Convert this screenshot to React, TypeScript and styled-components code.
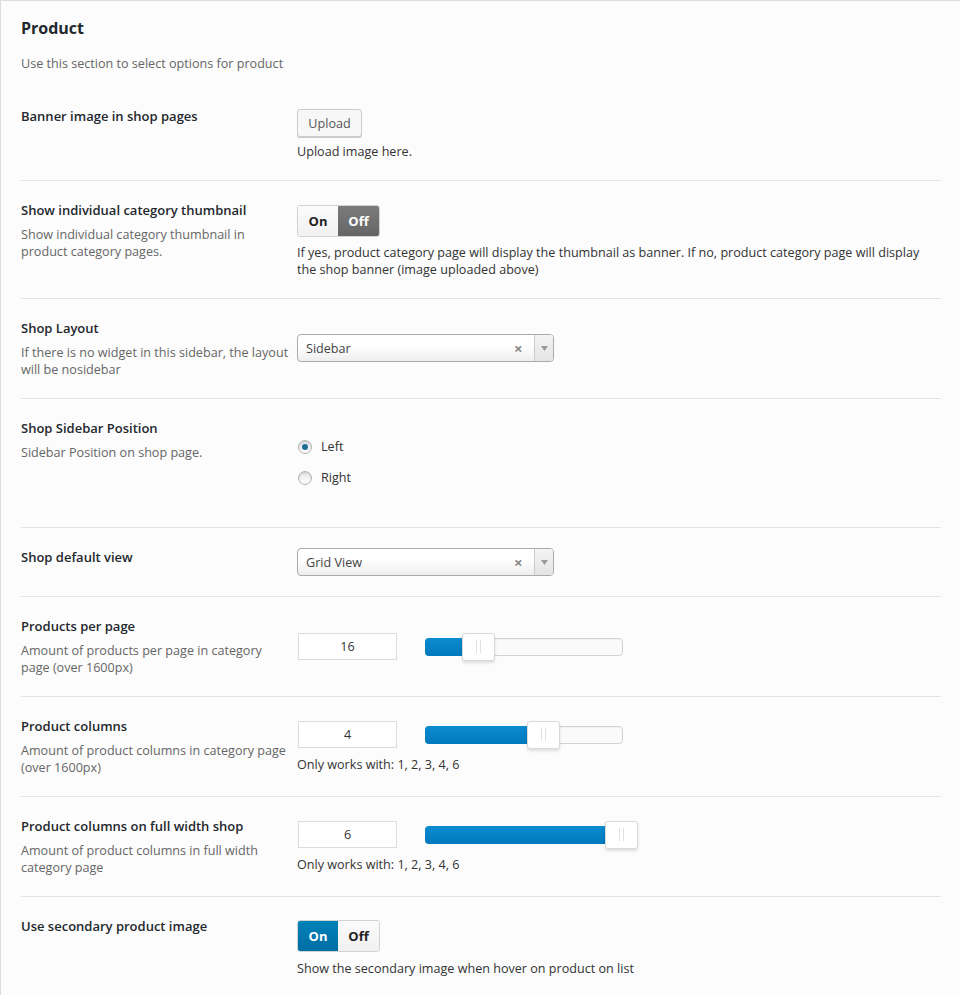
import React from "react";
import styled, { createGlobalStyle } from "styled-components";

const GlobalStyle = createGlobalStyle`
  html, body {
    margin: 0;
    padding: 0;
    background: #fcfcfc;
  }
  body {
    font-family: "Open Sans", "Noto Sans", sans-serif;
    font-size: 12.6px;
    color: #444;
  }
`;

type Option = {
  title: string;
  desc?: React.ReactNode;
  control: React.ReactNode;
  height: number;
  gap?: number;
  labelTop?: number;
};

const Toggle: React.FC<{ on: boolean }> = ({ on }) => (
  <ToggleBox>
    <ToggleSide $active={on} $blue>
      On
    </ToggleSide>
    <ToggleSide $active={!on}>Off</ToggleSide>
  </ToggleBox>
);

const SelectBox: React.FC<{ value: string }> = ({ value }) => (
  <Select>
    <SelectText>{value}</SelectText>
    <SelectClear>×</SelectClear>
    <SelectArrow>
      <svg width="7" height="5" viewBox="0 0 7 5">
        <path d="M0 0 L7 0 L3.5 5 Z" fill="#999" />
      </svg>
    </SelectArrow>
  </Select>
);

const Slider: React.FC<{ value: string; pct: number }> = ({ value, pct }) => (
  <SliderRow>
    <NumberBox>{value}</NumberBox>
    <Track>
      <Fill style={{ width: `${pct}%` }} />
      <Handle style={{ left: `${pct}%` }}>
        <Grip />
      </Handle>
    </Track>
  </SliderRow>
);

const Main: React.FC = () => {
  // 옵션 목록
  const options: Option[] = [
    {
      title: "Banner image in shop pages",
      height: 95,
      gap: 23,
      labelTop: 22,
      control: (
        <>
          <UploadButton>Upload</UploadButton>
          <Hint $top={6}>Upload image here.</Hint>
        </>
      ),
    },
    {
      title: "Show individual category thumbnail",
      desc: (
        <>
          Show individual category thumbnail in
          <br />
          product category pages.
        </>
      ),
      height: 118,
      gap: 24,
      control: (
        <>
          <Toggle on={false} />
          <Hint $top={7}>
            If yes, product category page will display the thumbnail as
            banner. If no, product category page will display the shop banner
            (image uploaded above)
          </Hint>
        </>
      ),
    },
    {
      title: "Shop Layout",
      desc: (
        <>
          If there is no widget in this sidebar, the layout
          <br />
          will be nosidebar
        </>
      ),
      height: 100,
      gap: 35,
      control: <SelectBox value="Sidebar" />,
    },
    {
      title: "Shop Sidebar Position",
      desc: "Sidebar Position on shop page.",
      height: 129,
      gap: 39,
      control: (
        <>
          <RadioLine>
            <Radio $checked />
            Left
          </RadioLine>
          <RadioLine>
            <Radio />
            Right
          </RadioLine>
        </>
      ),
    },
    {
      title: "Shop default view",
      height: 69,
      gap: 20,
      control: <SelectBox value="Grid View" />,
    },
    {
      title: "Products per page",
      desc: (
        <>
          Amount of products per page in category
          <br />
          page (over 1600px)
        </>
      ),
      height: 100,
      gap: 36,
      control: <Slider value="16" pct={27} />,
    },
    {
      title: "Product columns",
      desc: (
        <>
          Amount of product columns in category page
          <br />
          (over 1600px)
        </>
      ),
      height: 100,
      gap: 24,
      control: (
        <>
          <Slider value="4" pct={60} />
          <Hint $top={8}>Only works with: 1, 2, 3, 4, 6</Hint>
        </>
      ),
    },
    {
      title: "Product columns on full width shop",
      desc: (
        <>
          Amount of product columns in full width
          <br />
          category page
        </>
      ),
      height: 100,
      gap: 24,
      control: (
        <>
          <Slider value="6" pct={100} />
          <Hint $top={8}>Only works with: 1, 2, 3, 4, 6</Hint>
        </>
      ),
    },
    {
      title: "Use secondary product image",
      height: 100,
      gap: 23,
      control: (
        <>
          <Toggle on={true} />
          <Hint $top={8}>
            Show the secondary image when hover on product on list
          </Hint>
        </>
      ),
    },
  ];

  return (
    <>
      <GlobalStyle />
      <Panel>
        <Title>Product</Title>
        <Intro>Use this section to select options for product</Intro>
        {options.map((item, index) => (
          <Row key={index} $h={item.height} $last={index === options.length - 1}>
            <LabelCol $top={item.labelTop ?? 21}>
              <Label>{item.title}</Label>
              {item.desc && <Desc>{item.desc}</Desc>}
            </LabelCol>
            <ControlCol $top={item.gap ?? 20}>{item.control}</ControlCol>
          </Row>
        ))}
      </Panel>
    </>
  );
};

export default Main;

const Panel = styled.div`
  min-height: 995px;
  box-sizing: border-box;
  border-top: 1px solid #dcdcdc;
  border-left: 1px solid #dcdcdc;
  padding: 0 19px 0 20px;
  background: #fcfcfc;
`;

const Title = styled.h2`
  margin: 0;
  padding-top: 16px;
  font-size: 16px;
  font-weight: 700;
  line-height: 22px;
  color: #23282d;
`;

const Intro = styled.p`
  margin: 16px 0 14px;
  font-size: 12.6px;
  line-height: 17px;
  color: #666;
`;

const Row = styled.div<{ $h: number; $last?: boolean }>`
  display: grid;
  grid-template-columns: 276px 1fr;
  height: ${(p) => p.$h}px;
  box-sizing: border-box;
  border-bottom: ${(p) => (p.$last ? "none" : "1px solid #e4e4e4")};
`;

const LabelCol = styled.div<{ $top: number }>`
  padding-top: ${(p) => p.$top}px;
`;

const Label = styled.div`
  font-size: 13px;
  font-weight: 600;
  line-height: 17px;
  color: #23282d;
`;

const Desc = styled.div`
  margin-top: 7px;
  font-size: 12.6px;
  line-height: 17px;
  color: #666;
`;

const ControlCol = styled.div<{ $top: number }>`
  padding-top: ${(p) => p.$top}px;
`;

const Hint = styled.div<{ $top: number }>`
  margin-top: ${(p) => p.$top}px;
  font-size: 12.6px;
  line-height: 17px;
  color: #333;
  padding-right: 12px;
`;

const UploadButton = styled.button`
  display: block;
  height: 28px;
  width: 65px;
  padding: 0;
  font-family: inherit;
  font-size: 12.6px;
  color: #555;
  background: #f7f7f7;
  border: 1px solid #cccccc;
  border-radius: 3px;
  box-shadow: 0 1px 0 #ccc;
`;

const ToggleBox = styled.div`
  display: inline-flex;
  height: 32px;
  border: 1px solid #d2d2d2;
  border-radius: 3px;
  overflow: hidden;
  box-sizing: border-box;
`;

const ToggleSide = styled.div<{ $active: boolean; $blue?: boolean }>`
  display: flex;
  align-items: center;
  justify-content: center;
  width: ${(p) => (p.$blue ? 40 : 41)}px;
  font-size: 13px;
  font-weight: 700;
  color: ${(p) => (p.$active ? "#fff" : "#222")};
  background: ${(p) =>
    !p.$active
      ? "linear-gradient(#fbfbfb, #f1f1f1)"
      : p.$blue
      ? "linear-gradient(#0081b9, #006ea3)"
      : "linear-gradient(#7b7b7b, #656565)"};
`;

const Select = styled.div`
  display: flex;
  align-items: center;
  width: 257px;
  height: 28px;
  box-sizing: border-box;
  border: 1px solid #aaa;
  border-radius: 4px;
  background: linear-gradient(#ffffff 40%, #eeeeee);
`;

const SelectText = styled.span`
  flex: 1;
  padding-left: 8px;
  font-size: 12.6px;
  color: #444;
`;

const SelectClear = styled.span`
  width: 16px;
  font-size: 15px;
  font-weight: 700;
  color: #888;
  margin-right: 4px;
  line-height: 1;
`;

const SelectArrow = styled.span`
  display: flex;
  align-items: center;
  justify-content: center;
  width: 18px;
  height: 100%;
  border-left: 1px solid #ccc;
  background: linear-gradient(#f4f4f4, #e4e4e4);
  border-radius: 0 3px 3px 0;
`;

const RadioLine = styled.label`
  display: flex;
  align-items: center;
  gap: 9px;
  height: 17px;
  margin-bottom: 14px;
  font-size: 12.6px;
  color: #333;
`;

const Radio = styled.span<{ $checked?: boolean }>`
  position: relative;
  width: 12px;
  height: 12px;
  margin-left: 1px;
  border-radius: 50%;
  border: 1px solid #b4b4b4;
  background: linear-gradient(#e8e8e8, #fdfdfd);
  box-shadow: inset 0 1px 2px rgba(0, 0, 0, 0.15);

  &::after {
    content: "";
    display: ${(p) => (p.$checked ? "block" : "none")};
    position: absolute;
    left: 3px;
    top: 3px;
    width: 6px;
    height: 6px;
    border-radius: 50%;
    background: #1e6a99;
  }
`;

const SliderRow = styled.div`
  display: flex;
  align-items: center;
  gap: 28px;
  padding-left: 1px;
`;

const NumberBox = styled.div`
  width: 99px;
  height: 27px;
  box-sizing: border-box;
  border: 1px solid #dcdcdc;
  background: #fff;
  display: flex;
  align-items: center;
  justify-content: center;
  font-size: 12.6px;
  color: #333;
`;

const Track = styled.div`
  position: relative;
  width: 198px;
  height: 18px;
  box-sizing: border-box;
  border: 1px solid #d3d3d3;
  border-radius: 4px;
  background: #fafafa;
  box-shadow: inset 0 1px 1px #f0f0f0;
`;

const Fill = styled.div`
  height: 100%;
  margin: -1px 0 0 -1px;
  padding: 1px 0 1px 1px;
  border-radius: 4px 0 0 4px;
  background: linear-gradient(#0c8bd0, #0079bd);
`;

const Handle = styled.div`
  position: absolute;
  top: -6px;
  width: 33px;
  height: 28px;
  margin-left: -17px;
  box-sizing: border-box;
  border: 1px solid #d9d9d9;
  border-radius: 3px;
  background: #fff;
  box-shadow: 0 2px 3px rgba(0, 0, 0, 0.12);
  display: flex;
  align-items: center;
  justify-content: center;
`;

const Grip = styled.span`
  width: 3px;
  height: 13px;
  border-left: 1px solid #e2e2e2;
  border-right: 1px solid #e2e2e2;
`;
